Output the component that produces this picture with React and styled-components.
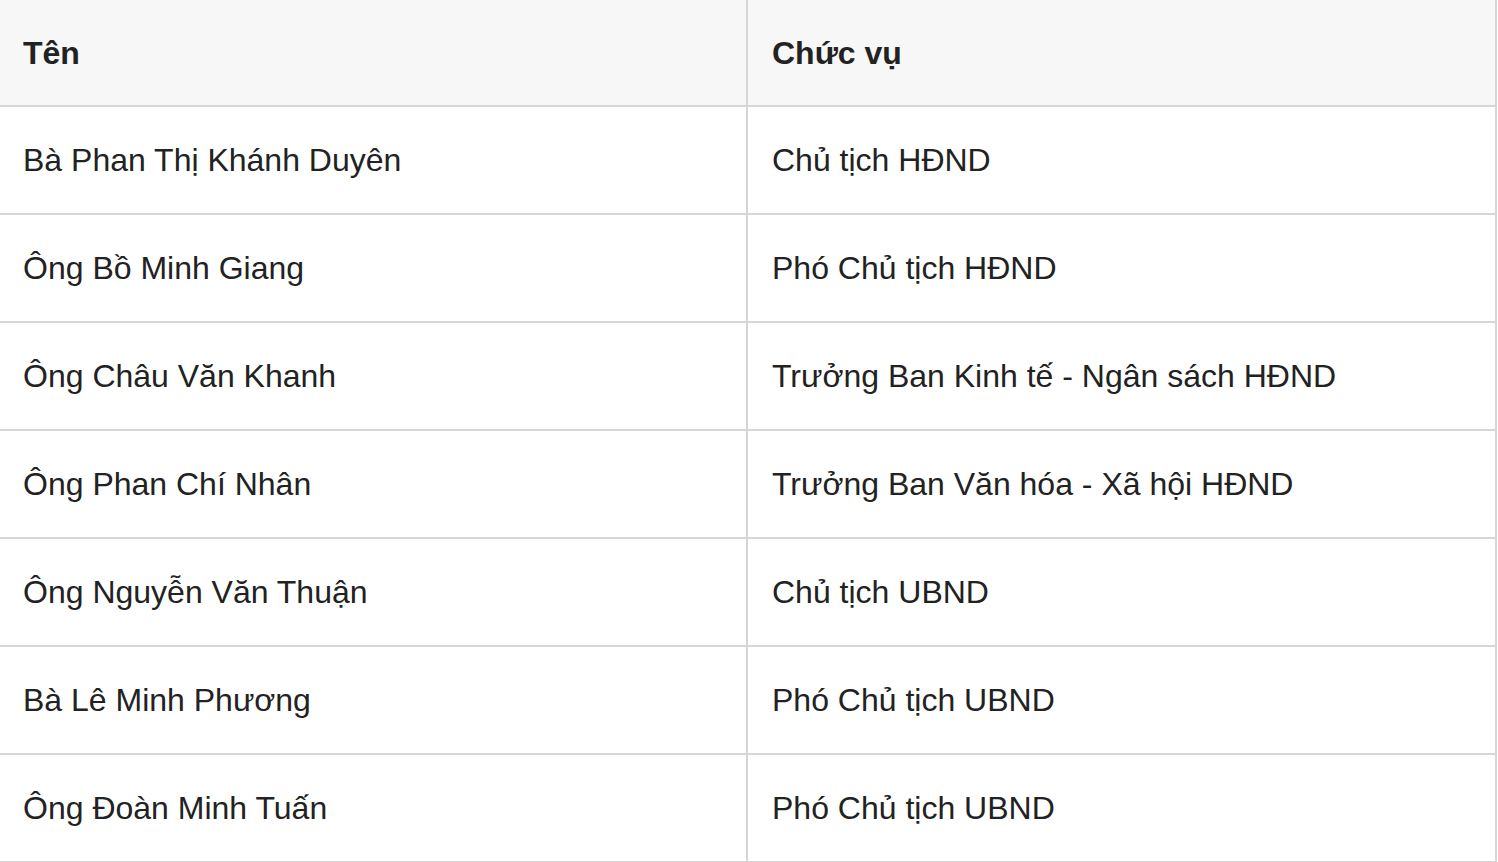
import React from 'react';
import styled, { createGlobalStyle } from 'styled-components';

const GlobalStyle = createGlobalStyle`
  html, body {
    margin: 0;
    padding: 0;
    background: #ffffff;
  }
  body {
    font-family: "Liberation Sans", Arial, Helvetica, sans-serif;
    color: #222222;
  }
`;

const Table = styled.div`
  display: grid;
  grid-template-columns: 748px 749px;
  width: 1497px;
`;

const Cell = styled.div`
  box-sizing: border-box;
  height: ${p => (p.head ? '107px' : '108px')};
  display: flex;
  align-items: center;
  padding-left: ${p => (p.first ? '23px' : '24px')};
  padding-top: 1px;
  border-right: 2px solid #d6d6d6;
  border-bottom: 2px solid #d6d6d6;
  background: ${p => (p.head ? '#f7f7f7' : '#ffffff')};
  font-size: 32px;
  font-weight: ${p => (p.head ? 700 : 400)};
  color: #222222;
  white-space: nowrap;
`;

const rows = [
  ['Bà Phan Thị Khánh Duyên', 'Chủ tịch HĐND'],
  ['Ông Bồ Minh Giang', 'Phó Chủ tịch HĐND'],
  ['Ông Châu Văn Khanh', 'Trưởng Ban Kinh tế - Ngân sách HĐND'],
  ['Ông Phan Chí Nhân', 'Trưởng Ban Văn hóa - Xã hội HĐND'],
  ['Ông Nguyễn Văn Thuận', 'Chủ tịch UBND'],
  ['Bà Lê Minh Phương', 'Phó Chủ tịch UBND'],
  ['Ông Đoàn Minh Tuấn', 'Phó Chủ tịch UBND'],
];

export default function App() {
  return (
    <>
      <GlobalStyle />
      <Table>
        <Cell head first>Tên</Cell>
        <Cell head>Chức vụ</Cell>
        {rows.map(([name, role]) => (
          <React.Fragment key={name}>
            <Cell first>{name}</Cell>
            <Cell>{role}</Cell>
          </React.Fragment>
        ))}
      </Table>
    </>
  );
}
